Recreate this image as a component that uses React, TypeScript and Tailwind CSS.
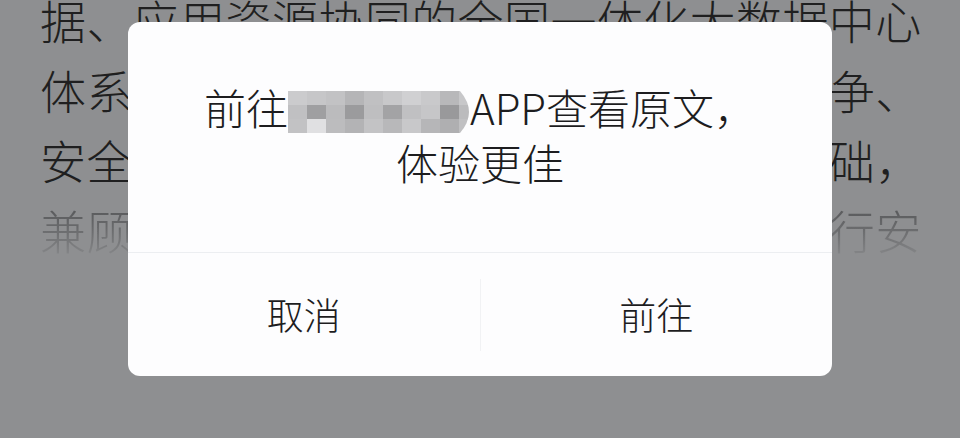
import React from 'react';

const lines = [
  '据、应用资源协同的全国一体化大数据中心',
  '体系，推动数据要素高效流通，提升竞争、',
  '安全可控的数字基础设施，夯实发展基础，',
];

// pixelated blur covering the app name
const mosaic = [
  ['#cbcbcd', '#c6c6c8', '#c2c2c4', '#b5b5b7', '#c0c0c2', '#c8c8ca', '#d0d0d2', '#c9c9cb', '#b8b8ba', '#c7c7c9'],
  ['#c0c0c2', '#9f9fa1', '#bbbbbd', '#9b9b9d', '#bebec0', '#a3a3a5', '#c0c0c2', '#c6c6c8', '#99999b', '#bbbbbd'],
  ['#c2c2c4', '#e0e0e2', '#bcbcbe', '#b3b3b5', '#c3c3c5', '#b8b8ba', '#c8c8ca', '#b6b6b8', '#afafb1', '#c0c0c2'],
];

function Mosaic() {
  const cw = 19;
  const rh = 14;
  return (
    <svg width={190} height={42} viewBox="0 0 190 42" className="inline-block align-middle -mt-[4px] mr-[-8px]">
      <defs>
        <clipPath id="mclip">
          <path d="M0 0 H172 Q190 21 172 42 H0 Z" />
        </clipPath>
      </defs>
      <g clipPath="url(#mclip)">
        {mosaic.map((row, r) =>
          row.map((c, i) => <rect key={`${r}-${i}`} x={i * cw} y={r * rh} width={cw + 0.5} height={rh + 0.5} fill={c} />)
        )}
      </g>
    </svg>
  );
}

export default function App() {
  return (
    <div
      className="relative w-[960px] h-[438px] overflow-hidden bg-[#8e8f91] font-light"
      style={{ fontFamily: '"Noto Sans CJK SC", "Noto Sans", sans-serif' }}
    >
      {/* article text behind the dimmed overlay */}
      <div className="-mt-[16px] pl-[40px] text-[46px] leading-[70px] tracking-[0.4px] text-[#1f1f20] whitespace-nowrap">
        {lines.map((l) => (
          <div key={l}>{l}</div>
        ))}
        <div className="bg-linear-to-b from-[#4c4d4f] via-[#6a6b6d] to-[#8e8f91] bg-clip-text text-transparent">
          兼顾效率与公平，保障全国数据中心运行安
        </div>
      </div>

      <div className="absolute left-[128px] top-[22px] w-[704px] h-[354px] rounded-[12px] bg-[#fdfdfe] flex flex-col overflow-hidden">
        <div className="h-[230px] pt-[57px] flex flex-col items-center text-[42px] leading-[55px] text-[#1d1d1f] whitespace-nowrap">
          <div>
            前往<Mosaic />APP查看原文，
          </div>
          <div>体验更佳</div>
        </div>
        <div className="flex-1 flex items-center border-t border-[#eceef1] text-[37px] text-[#1d1d1f]">
          <div className="flex-1 text-center">取消</div>
          <div className="w-px h-[72px] bg-[#f1f2f4]" />
          <div className="flex-1 text-center">前往</div>
        </div>
      </div>
    </div>
  );
}
